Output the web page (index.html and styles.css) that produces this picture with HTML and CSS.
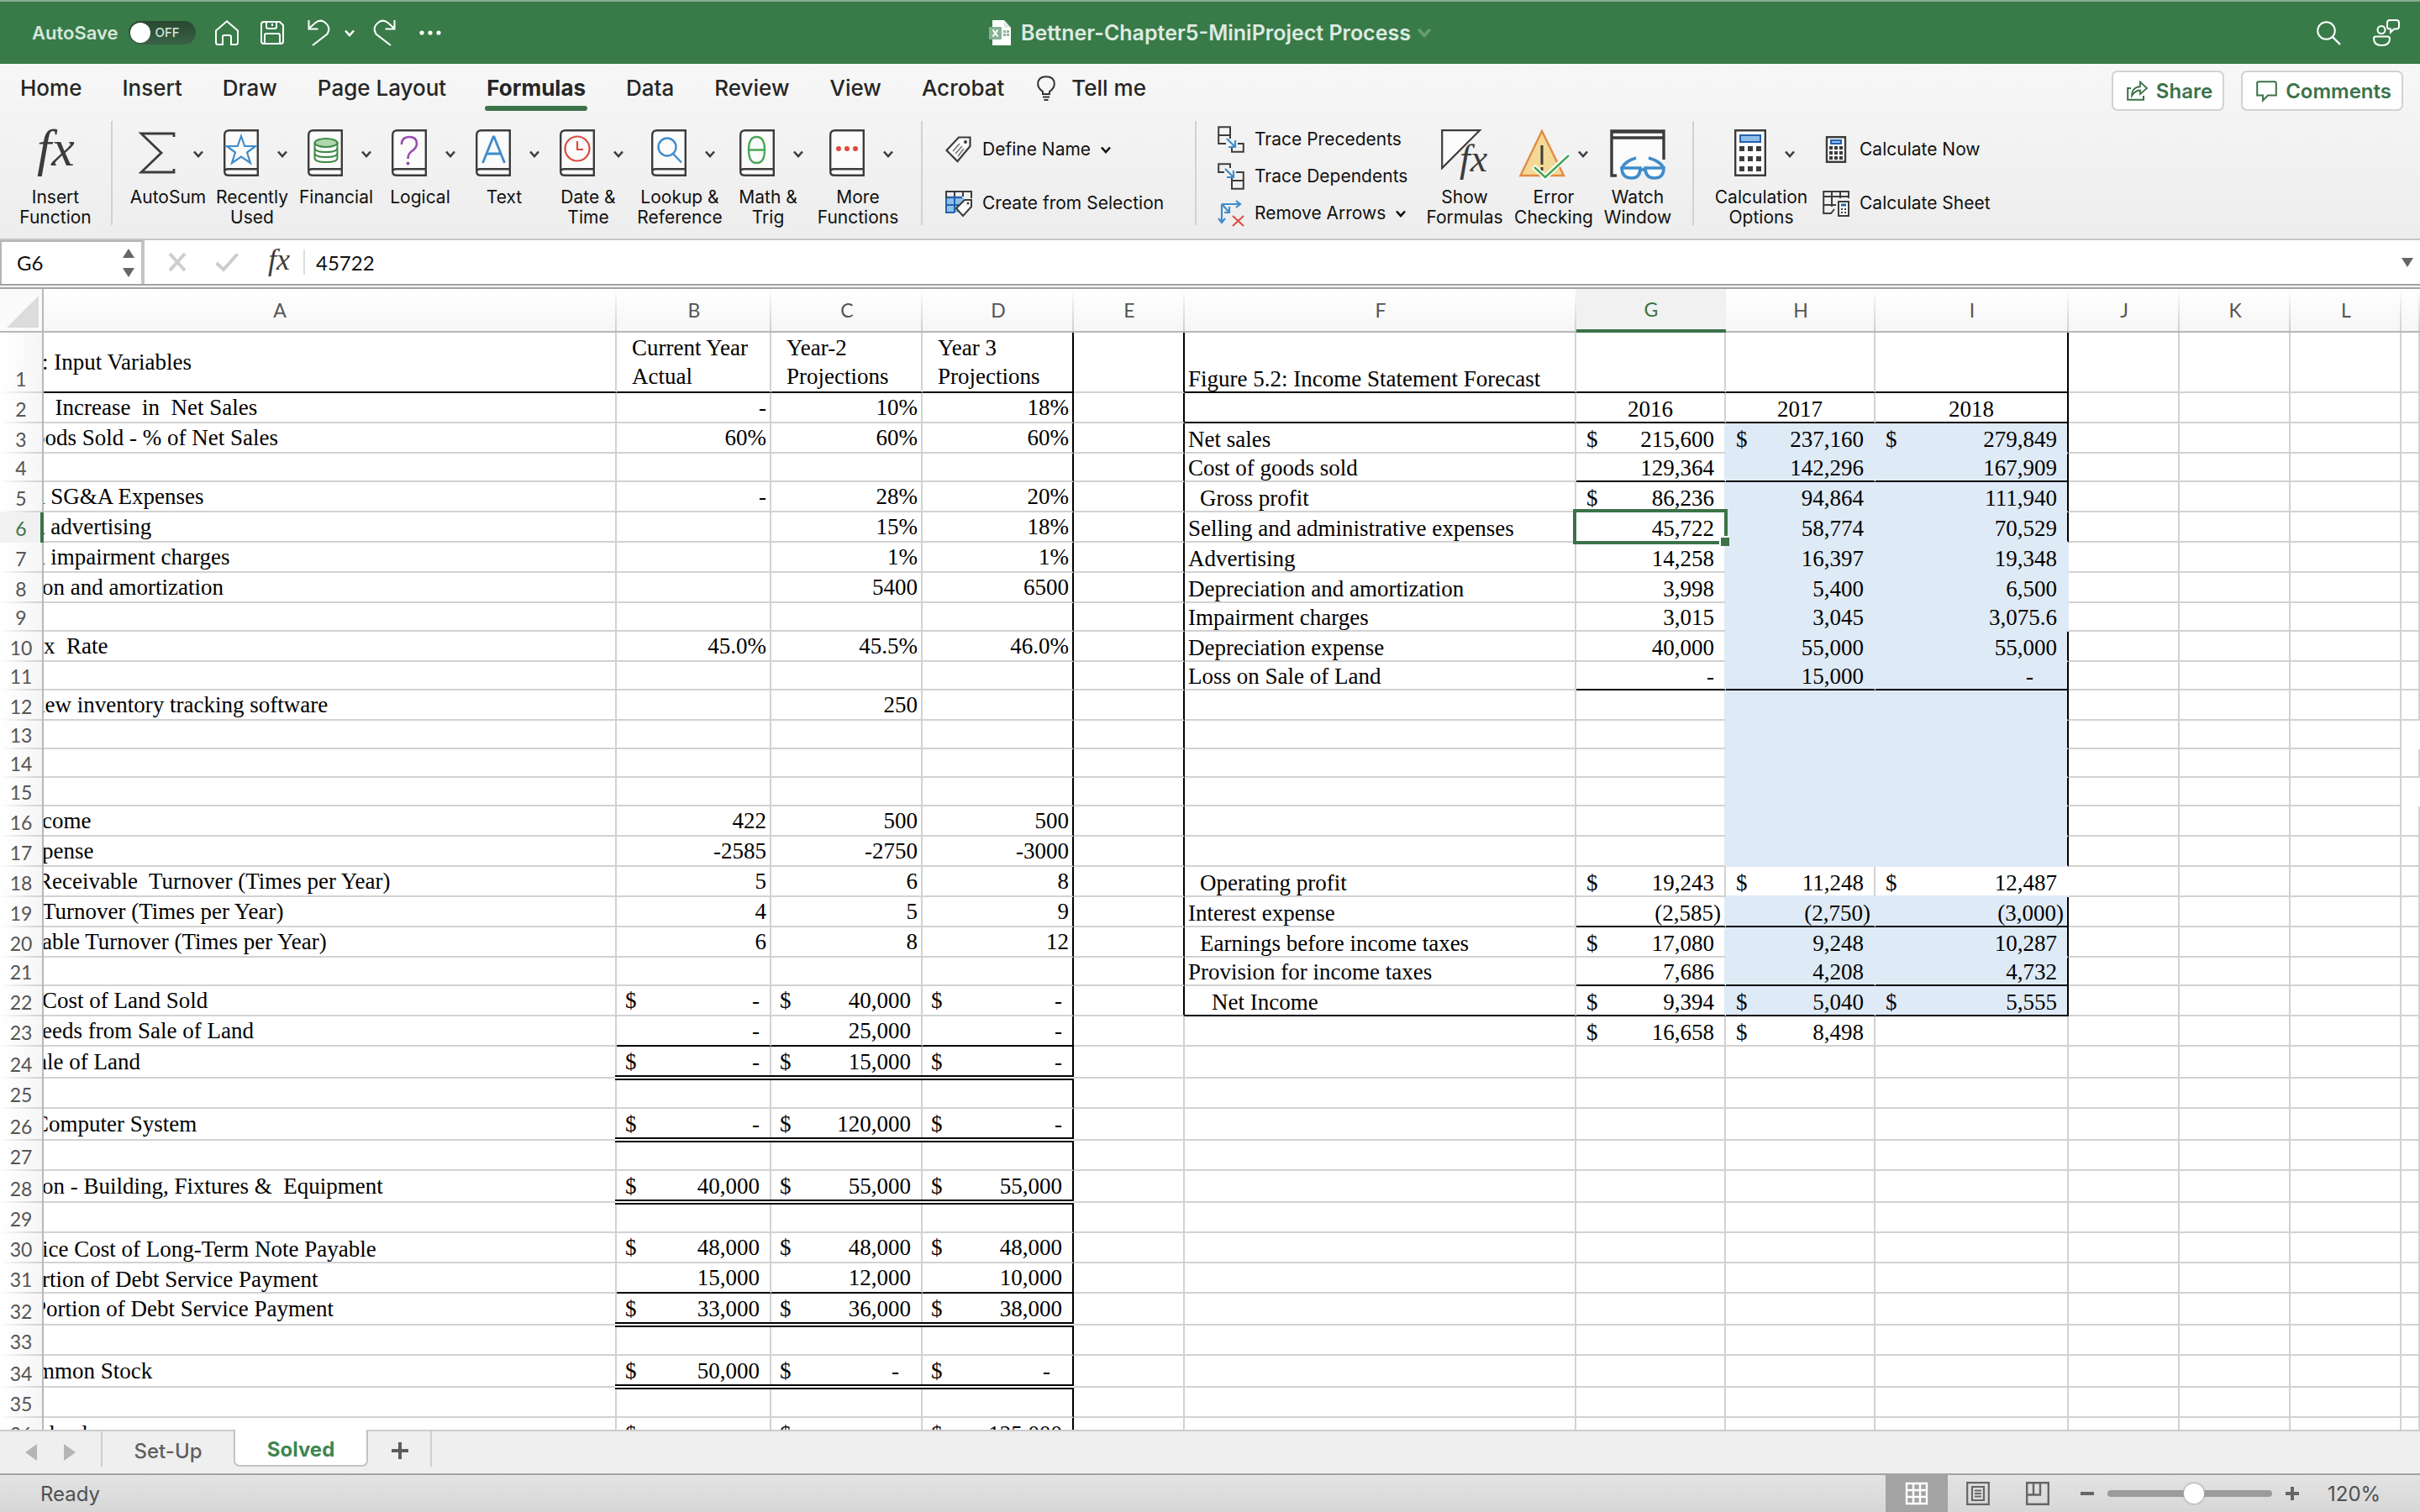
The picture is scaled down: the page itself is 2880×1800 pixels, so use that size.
FILE: index.html
```html
<!DOCTYPE html>
<html lang="en">
<head>
<meta charset="utf-8">
<title>Bettner-Chapter5-MiniProject Process</title>
<link rel="stylesheet" href="styles.css">
</head>
<body>
<svg class="defs" aria-hidden="true">
  <symbol id="chev" viewBox="0 0 12 9"><path d="M1 1.5l5 5.5l5-5.5" fill="none" stroke="currentColor" stroke-width="2.6"/></symbol>
  <symbol id="book" viewBox="0 0 42 56"><path d="M1.2 49V7Q1.2 1.2 7 1.2H40.8V54.8H6.5Q1.2 54.8 1.2 50.500Q1.200 47.200 5.500 47.200H40.800" fill="#fbfbfb" stroke="#3c3c3c" stroke-width="2.400"/></symbol>
</svg>

<header class="titlebar">
  <div class="quick">
    <label class="autosave">AutoSave <span class="switch"><input type="checkbox"><span class="off">OFF</span></span></label>
    <button class="home" aria-label="Home"><svg width="28" height="30" viewBox="0 0 28 30"><path d="M1 12.500L14 1.200L27 12.500V26.500Q27 29 24.500 29H19V20Q19 18 17 18H11Q9 18 9 20V29H3.500Q1 29 1 26.500Z" fill="none" stroke="#fff" stroke-width="2"/></svg></button>
    <button class="save" aria-label="Save"><svg width="28" height="28" viewBox="0 0 28 28"><path d="M4 1H23L27 5V24Q27 27 24 27H4Q1 27 1 24V4Q1 1 4 1ZM7 1V7Q7 9 9 9H17Q19 9 19 7V1M5 27V17Q5 15 7 15H21Q23 15 23 17V27M14 3V6" fill="none" stroke="#fff" stroke-width="2"/></svg></button>
    <button class="undo" aria-label="Undo"><svg width="27" height="32" viewBox="0 0 27 32"><path d="M1.500 1V11.500H12.500M1.500 11L9.500 4Q15 -0.500 20.500 3.500Q28.500 9.500 23.500 17.500L6 31" fill="none" stroke="#fff" stroke-width="2"/></svg></button>
    <button class="undo-more" aria-label="Undo history"><svg width="12" height="9"><use href="#chev"/></svg></button>
    <button class="redo" aria-label="Redo"><svg width="27" height="32" viewBox="0 0 27 32"><path d="M25.500 1V11.500H14.500M25.500 11L17.500 4Q12 -0.500 6.500 3.500Q-1.500 9.500 3.500 17.500L21 31" fill="none" stroke="#fff" stroke-width="2"/></svg></button>
    <button class="dots" aria-label="More commands"><svg width="26" height="6"><g fill="#fff"><circle cx="3" cy="3" r="2.600"/><circle cx="13" cy="3" r="2.600"/><circle cx="23" cy="3" r="2.600"/></g></svg></button>
  </div>
  <h1 class="doc">
    <svg width="26" height="30" viewBox="0 0 26 30"><path d="M4 0H18L26 9V30H4Z" fill="#fff"/><path d="M18 0V9H26" fill="#dfe9e2"/><path d="M17 12h3v3h-3zM21 12h3v3h-3zM17 16h3v3h-3zM21 16h3v3h-3z" fill="#8fb59a"/><rect y="8" width="15" height="15" rx="1" fill="#86b093"/><path d="M4.500 11.500L10.500 19.500M10.500 11.500L4.500 19.500" stroke="#fff" stroke-width="2"/></svg>
    <span>Bettner-Chapter5-MiniProject Process</span>
    <svg class="faint" width="16" height="12"><use href="#chev"/></svg>
  </h1>
  <div class="right">
    <button aria-label="Search"><svg width="29" height="29" viewBox="0 0 29 29"><circle cx="11.500" cy="11.500" r="10.300" fill="none" stroke="#fff" stroke-width="2"/><path d="M19 19L28 28" stroke="#fff" stroke-width="2.400"/></svg></button>
    <button aria-label="Account"><svg width="32" height="32" viewBox="0 0 32 32"><g fill="none" stroke="#fff" stroke-width="2"><circle cx="10" cy="12.500" r="4.500"/><path d="M1 23Q1 20.500 3.500 20.500H17.500Q20 20.500 20 23Q20 31 10.500 31Q1 31 1 23Z"/><path d="M20 1H28Q31 1 31 4V8.500Q31 11.500 28 11.500H25L21 15.500V11.500H20Q17 11.500 17 8.500V4Q17 1 20 1Z"/></g></svg></button>
  </div>
</header>

<section class="ribbon">
  <div class="tabrow">
    <nav class="tabs">
      <button>Home</button><button>Insert</button><button>Draw</button><button>Page Layout</button><button class="on">Formulas</button><button>Data</button><button>Review</button><button>View</button><button>Acrobat</button>
      <button class="tell"><svg width="22" height="30" viewBox="0 0 22 30"><path d="M7 22V19Q1.200 15 1.200 10Q1.200 1.200 11 1.200Q20.800 1.200 20.800 10Q20.800 15 15 19V22ZM7 25.500H15M8.500 29H13.500" fill="none" stroke="#333" stroke-width="2"/></svg>Tell me</button>
    </nav>
    <div class="actions">
      <button><svg width="25" height="24" viewBox="0 0 25 24"><path d="M5 9H1.200V22.800H20V18" fill="none" stroke="#3b7249" stroke-width="2"/><path d="M6 18Q6 8 16 7V1.500L24 9L16 16V11.500Q10 11.500 6 18Z" fill="none" stroke="#3b7249" stroke-width="1.800"/></svg>Share</button>
      <button><svg width="25" height="25" viewBox="0 0 25 25"><path d="M1.200 3Q1.200 1.200 3 1.200H22Q23.800 1.200 23.800 3V17.500H14L8 23.500V17.500H1.200Z" fill="none" stroke="#3b7249" stroke-width="2"/></svg>Comments</button>
    </div>
  </div>

  <div class="tools">
    <button class="big w132"><span class="pic"><svg width="52" height="58" viewBox="0 0 52 58"><text class="fx" x="4" y="43" font-size="62">fx</text></svg></span><span class="cap">Insert<br>Function</span></button>
    <i class="sep"></i>
    <div class="group library">
      <button class="big"><span class="pic off4"><svg width="42" height="56" viewBox="0 0 42 56"><path d="M41 9V5H2L26 28L2 51H41V47" fill="none" stroke="#3c3c3c" stroke-width="2.800"/></svg><svg class="ch" width="12" height="9"><use href="#chev"/></svg></span><span class="cap">AutoSum</span></button>
      <button class="big"><span class="pic off4"><svg width="42" height="56"><use href="#book"/><path d="M21 8L25.200 20H38L28 27.500L32 40L21 32.500L10 40L14 27.500L4 20H16.800Z" fill="none" stroke="#3f8ccb" stroke-width="2.200"/></svg><svg class="ch" width="12" height="9"><use href="#chev"/></svg></span><span class="cap">Recently<br>Used</span></button>
      <button class="big"><span class="pic off4"><svg width="42" height="56"><use href="#book"/><g fill="none" stroke="#3f8a44" stroke-width="2"><ellipse cx="22" cy="16" rx="13.500" ry="5" fill="#aed7ae"/><path d="M8.500 16V34Q8.500 39 22 39Q35.500 39 35.500 34V16M8.500 22Q8.500 27 22 27Q35.500 27 35.500 22M8.500 28Q8.500 33 22 33Q35.500 33 35.500 28"/></g></svg><svg class="ch" width="12" height="9"><use href="#chev"/></svg></span><span class="cap">Financial</span></button>
      <button class="big"><span class="pic off4"><svg width="42" height="56"><use href="#book"/><path d="M12 18Q12 9 21 9Q30 9 30 17Q30 22 24 26Q19.500 29 19.500 35" fill="none" stroke="#9a4bae" stroke-width="2.600"/><circle cx="19.500" cy="40.500" r="2" fill="#9a4bae"/></svg><svg class="ch" width="12" height="9"><use href="#chev"/></svg></span><span class="cap">Logical</span></button>
      <button class="big"><span class="pic off4"><svg width="42" height="56"><use href="#book"/><path d="M8.500 40L21 9H22L34.500 40M13 29H30" fill="none" stroke="#3f8ccb" stroke-width="2.800"/></svg><svg class="ch" width="12" height="9"><use href="#chev"/></svg></span><span class="cap">Text</span></button>
      <button class="big"><span class="pic off4"><svg width="42" height="56"><use href="#book"/><g fill="none" stroke="#dc4a41" stroke-width="2.200"><circle cx="21" cy="23" r="14.500"/><path d="M21 14V24H28"/></g></svg><svg class="ch" width="12" height="9"><use href="#chev"/></svg></span><span class="cap">Date &amp;<br>Time</span></button>
      <button class="big"><span class="pic off4"><svg width="42" height="56"><use href="#book"/><g fill="none" stroke="#3f8ccb" stroke-width="2.400"><circle cx="19" cy="21" r="10.500"/><path d="M26 29L36 39.500"/></g></svg><svg class="ch" width="12" height="9"><use href="#chev"/></svg></span><span class="cap">Lookup &amp;<br>Reference</span></button>
      <button class="big"><span class="pic off4"><svg width="42" height="56"><use href="#book"/><path d="M20.500 9Q30 9 30 24.500Q30 40 20.500 40Q11 40 11 24.500Q11 9 20.500 9ZM11 24.500H30" fill="none" stroke="#4aa657" stroke-width="2.400"/></svg><svg class="ch" width="12" height="9"><use href="#chev"/></svg></span><span class="cap">Math &amp;<br>Trig</span></button>
      <button class="big"><span class="pic off4"><svg width="42" height="56"><use href="#book"/><g fill="#dc4a41"><circle cx="11" cy="23" r="3"/><circle cx="21" cy="23" r="3"/><circle cx="31" cy="23" r="3"/></g></svg><svg class="ch" width="12" height="9"><use href="#chev"/></svg></span><span class="cap">More<br>Functions</span></button>
    </div>
    <i class="sep"></i>
    <div class="small names">
      <button><svg width="32" height="32" viewBox="0 0 32 32"><path d="M1.500 17L16 1.500H29.500V12L14.500 30Z" fill="#fbfbfb" stroke="#3c3c3c" stroke-width="2.200"/><circle cx="24" cy="7" r="2" fill="#3c3c3c"/><path d="M9 18L17 9M12 21L20 12M15 24L22 15" stroke="#777" stroke-width="1.600"/></svg><span>Define Name</span><svg width="12" height="9"><use href="#chev"/></svg></button>
      <button><svg width="32" height="32" viewBox="0 0 32 32"><path d="M1 9H22V27H1Z" fill="#8fc0ea"/><path d="M1 18H16M1 27H11M11 9V27M1 9V28" stroke="#2461ae" stroke-width="2"/><path d="M1 9H20" stroke="#2461ae" stroke-width="2.400"/><path d="M1 10V2H31V10M11 2V8M21 2V8" fill="none" stroke="#3c3c3c" stroke-width="2"/><path d="M13 22L23 12H31V20L21 31Z" fill="#fbfbfb" stroke="#3c3c3c" stroke-width="2"/><circle cx="27" cy="16" r="1.500" fill="#3c3c3c"/></svg><span>Create from Selection</span></button>
    </div>
    <i class="sep"></i>
    <div class="small audit">
      <button><svg width="32" height="32" viewBox="0 0 32 32"><path d="M10 21H1.200V1.200H15V15M1.200 11H15M24 21H30.800V30.800H17V25" fill="none" stroke="#3c3c3c" stroke-width="2"/><path d="M11 15L21 25M21 17V25H13" fill="none" stroke="#3f8ccb" stroke-width="2.200"/></svg><span>Trace Precedents</span></button>
      <button><svg width="32" height="32" viewBox="0 0 32 32"><path d="M8 11H1.200V1.200H15V6M22 11H30.800V30.800H17V21H30.800M17 21V18" fill="none" stroke="#3c3c3c" stroke-width="2"/><path d="M9 7L19 17M19 9V17H11" fill="none" stroke="#3f8ccb" stroke-width="2.200"/></svg><span>Trace Dependents</span></button>
      <button><svg width="32" height="32" viewBox="0 0 32 32"><path d="M5 5H27M22 1L27 5L22 9M5 5V26M1 22L5 27L9 22M6 6L14 15M14 8V15H8" fill="none" stroke="#3f8ccb" stroke-width="2.200"/><path d="M18 19L31 31M31 19L18 31" stroke="#dc4a41" stroke-width="2"/></svg><span>Remove Arrows</span><svg width="12" height="9"><use href="#chev"/></svg></button>
    </div>
    <button class="big w106"><span class="pic"><svg width="56" height="58" viewBox="0 0 56 58"><path d="M1.200 46V1.200H46Z" fill="#fbfbfb" stroke="#3c3c3c" stroke-width="2.200"/><text class="fx" x="22" y="50" font-size="46">fx</text></svg></span><span class="cap">Show<br>Formulas</span></button>
    <button class="big w106"><span class="pic"><svg class="warn" width="60" height="58" viewBox="0 0 60 58"><path d="M27 2L53 55H1.500Z" fill="#f3d995" stroke="#e28b45" stroke-width="2.400"/><path d="M27 19V42M27 45V49" stroke="#3c3c3c" stroke-width="3"/><path d="M17 44L31 57L59 30" fill="none" stroke="#fff" stroke-width="6"/><path d="M18 45L31 57L59 31" fill="none" stroke="#45a555" stroke-width="2.400"/></svg><svg class="ch near" width="12" height="9"><use href="#chev"/></svg></span><span class="cap">Error<br>Checking</span></button>
    <button class="big w94"><span class="pic"><svg width="66" height="60" viewBox="0 0 66 60"><path d="M8 55H2V2H64V36" fill="#fbfbfb" stroke="#3c3c3c" stroke-width="3.400"/><path d="M2 3H64M2 10H64" stroke="#3c3c3c" stroke-width="3.600"/><g fill="#fff" stroke="#3f8ccb" stroke-width="3.600"><path d="M14 46H36Q36 58 26 58Q14 58 14 46ZM42 46H64Q64 58 53 58Q42 58 42 46Z"/><path d="M36 48H42M14 46Q18 38 31 34M64 46Q60 38 46 34" fill="none"/></g></svg></span><span class="cap">Watch<br>Window</span></button>
    <i class="sep wide"></i>
    <button class="big w118"><span class="pic off4"><svg width="38" height="56" viewBox="0 0 38 56"><path d="M1.200 1.200H36.800V54.800H1.200Z" fill="#fff" stroke="#3c3c3c" stroke-width="2.400"/><path d="M7 7H31V15H7Z" fill="#8fbdea" stroke="#2461ae" stroke-width="2"/><path d="M6 23H32M6 35H32M6 47H32" stroke="#3c3c3c" stroke-width="6" stroke-dasharray="6 4"/></svg><svg class="ch" width="12" height="9"><use href="#chev"/></svg></span><span class="cap">Calculation<br>Options</span></button>
    <div class="small calc">
      <button><svg width="32" height="32" viewBox="0 0 32 32"><path d="M5 1.200H27V30.800H5Z" fill="#fff" stroke="#3c3c3c" stroke-width="2.400"/><path d="M9 7H23" stroke="#2461ae" stroke-width="6"/><path d="M11 7H21" stroke="#8fbdea" stroke-width="2"/><path d="M8 14H24M8 20H24M8 26H24" stroke="#3c3c3c" stroke-width="4" stroke-dasharray="4 2"/></svg><span>Calculate Now</span></button>
      <button><svg width="32" height="32" viewBox="0 0 32 32"><path d="M31 10V2H1.200V28H10L14 23M1 8H31M1 18H16M11 2V20M21 2V10" fill="none" stroke="#3c3c3c" stroke-width="2"/><path d="M19 14H31V31H19Z" fill="#fff" stroke="#3c3c3c" stroke-width="2"/><path d="M22 18H28" stroke="#2461ae" stroke-width="3"/><path d="M22 23H29M22 27H29" stroke="#3c3c3c" stroke-width="2" stroke-dasharray="2 2"/></svg><span>Calculate Sheet</span></button>
    </div>
  </div>
</section>

<section class="formulabar">
  <div class="namebox"><input aria-label="Name box" value="G6"><svg width="14" height="34" viewBox="0 0 14 34"><path d="M0 11L7 0L14 11ZM0 23L7 34L14 23Z" fill="#666"/></svg></div>
  <button class="cancel" aria-label="Cancel"><svg width="22" height="22" viewBox="0 0 22 22"><path d="M2 1L20 21M20 1L2 21" stroke="#cdcdcd" stroke-width="4"/></svg></button>
  <button class="enter" aria-label="Enter"><svg width="28" height="22" viewBox="0 0 28 22"><path d="M1.500 12L10 20L26.500 1.500" fill="none" stroke="#cdcdcd" stroke-width="4"/></svg></button>
  <button class="fxb" aria-label="Insert function"><svg width="32" height="34" viewBox="0 0 32 34"><text class="fx" x="4" y="26" font-size="36">fx</text></svg></button>
  <input class="formula" aria-label="Formula" value="45722">
  <button class="expand" aria-label="Expand formula bar"><svg width="14" height="11"><path d="M0 0H14L7 11Z" fill="#666"/></svg></button>
</section>

<main class="sheet">
<table>
<colgroup><col class="c-n"><col class="c-a"><col class="c-b"><col class="c-c"><col class="c-c"><col class="c-e"><col class="c-f"><col class="c-g"><col class="c-g"><col class="c-i"><col class="c-e"><col class="c-e"><col class="c-e"><col></colgroup>
<thead><tr><th class="corner"><svg width="38" height="38"><path d="M38 0V38H0Z" fill="#dcdcdc"/></svg><th class="first">A<th>B<th>C<th>D<th>E<th>F<th class="cur">G<th>H<th>I<th>J<th>K<th>L<th></tr></thead>
<tbody>
<tr class="h72 stmt edge line-in line-fi"><th>1<td class="cut2">: Input Variables<td class="head">Current Year<br>Actual<td class="head">Year-2<br>Projections<td class="head">Year 3<br>Projections<td><td>Figure 5.2: Income Statement Forecast<td><td><td><td><td><td><td></tr>
<tr class="stmt edge line-fi years"><th>2<td class="cut12">e  Increase  in  Net Sales<td>-<td>10%<td>18%<td><td><td>2016<td>2017<td>2018<td><td><td><td></tr>
<tr class="stmt edge fill"><th>3<td class="cut12">oods Sold - % of Net Sales<td>60%<td>60%<td>60%<td><td>Net sales<td><span>$</span>215,600<td><span>$</span>237,160<td><span>$</span>279,849<td><td><td><td></tr>
<tr class="h34 stmt edge fill line-gi"><th>4<td><td><td><td><td><td>Cost of goods sold<td>129,364<td>142,296<td>167,909<td><td><td><td></tr>
<tr class="stmt edge fill"><th>5<td class="cut12">d SG&amp;A Expenses<td>-<td>28%<td>20%<td><td class="in1">Gross profit<td><span>$</span>86,236<td>94,864<td>111,940<td><td><td><td></tr>
<tr class="stmt edge fill"><th class="cur">6<td class="cut12">d advertising<td><td>15%<td>18%<td><td>Selling and administrative expenses<td class="active">45,722<td>58,774<td>70,529<td><td><td><td></tr>
<tr class="stmt fill"><th>7<td class="cut12">d impairment charges<td><td>1%<td>1%<td><td>Advertising<td>14,258<td>16,397<td>19,348<td><td><td><td></tr>
<tr class="stmt fill"><th>8<td class="cut2">on and amortization<td><td>5400<td>6500<td><td>Depreciation and amortization<td>3,998<td>5,400<td>6,500<td><td><td><td></tr>
<tr class="h34 stmt fill"><th>9<td><td><td><td><td><td>Impairment charges<td>3,015<td>3,045<td>3,075.6<td><td><td><td></tr>
<tr class="stmt edge fill"><th>10<td>x  Rate<td>45.0%<td>45.5%<td>46.0%<td><td>Depreciation expense<td>40,000<td>55,000<td>55,000<td><td><td><td></tr>
<tr class="h34 stmt edge fill line-gi"><th>11<td><td><td><td><td><td>Loss on Sale of Land<td>-<td>15,000<td class="dash3">-<td><td><td><td></tr>
<tr class="stmt edge fill"><th>12<td class="cut12">new inventory tracking software<td><td>250<td><td><td><td><td><td><td><td><td><td></tr>
<tr class="h34 stmt edge fill"><th>13<td><td><td><td><td><td><td><td><td><td><td><td></tr>
<tr class="h34 stmt edge fill"><th>14<td><td><td><td><td><td><td><td><td><td><td><td><td></tr>
<tr class="h34 stmt edge fill"><th>15<td><td><td><td><td><td><td><td><td><td><td><td></tr>
<tr class="stmt edge fill"><th>16<td class="cut2">come<td>422<td>500<td>500<td><td><td><td><td><td><td><td><td></tr>
<tr class="stmt edge fill"><th>17<td class="cut2">pense<td>-2585<td>-2750<td>-3000<td><td><td><td><td><td><td><td><td></tr>
<tr class="stmt profit"><th>18<td class="cut8">Receivable  Turnover (Times per Year)<td>5<td>6<td>8<td><td class="in1">Operating profit<td><span>$</span>19,243<td><span>$</span>11,248<td><span>$</span>12,487<td><td><td><td></tr>
<tr class="stmt edge fill line-gi neg"><th>19<td class="cut2">Turnover (Times per Year)<td>4<td>5<td>9<td><td>Interest expense<td>(2,585)<td>(2,750)<td>(3,000)<td><td><td><td></tr>
<tr class="stmt edge fill"><th>20<td class="cut2">able Turnover (Times per Year)<td>6<td>8<td>12<td><td class="in1">Earnings before income taxes<td><span>$</span>17,080<td>9,248<td>10,287<td><td><td><td></tr>
<tr class="h34 stmt edge fill line-gi"><th>21<td><td><td><td><td><td>Provision for income taxes<td>7,686<td>4,208<td>4,732<td><td><td><td></tr>
<tr class="stmt edge fill line-fi acct"><th>22<td class="cut2">Cost of Land Sold<td><span>$</span>-<td><span>$</span>40,000<td><span>$</span>-<td><td class="in2">Net Income<td><span>$</span>9,394<td><span>$</span>5,040<td><span>$</span>5,555<td><td><td><td></tr>
<tr class="acct line-bd"><th>23<td class="cut2">eeds from Sale of Land<td>-<td>25,000<td>-<td><td><td><span>$</span>16,658<td><span>$</span>8,498<td><td><td><td><td></tr>
<tr class="h38 acct total"><th>24<td class="cut8">ale of Land<td><span>$</span>-<td><span>$</span>15,000<td><span>$</span>-<td><td><td><td><td><td><td><td><td></tr>
<tr><th>25<td><td><td><td><td><td><td><td><td><td><td><td><td></tr>
<tr class="h38 acct total"><th>26<td class="cut12">Computer System<td><span>$</span>-<td><span>$</span>120,000<td><span>$</span>-<td><td><td><td><td><td><td><td><td></tr>
<tr><th>27<td><td><td><td><td><td><td><td><td><td><td><td><td></tr>
<tr class="h38 acct total"><th>28<td class="cut2">on - Building, Fixtures &amp;  Equipment<td><span>$</span>40,000<td><span>$</span>55,000<td><span>$</span>55,000<td><td><td><td><td><td><td><td><td></tr>
<tr><th>29<td><td><td><td><td><td><td><td><td><td><td><td><td></tr>
<tr class="acct"><th>30<td class="low cut2">ice Cost of Long-Term Note Payable<td><span>$</span>48,000<td><span>$</span>48,000<td><span>$</span>48,000<td><td><td><td><td><td><td><td><td></tr>
<tr class="acct line-bd"><th>31<td class="low cut2">rtion of Debt Service Payment<td>15,000<td>12,000<td>10,000<td><td><td><td><td><td><td><td><td></tr>
<tr class="h38 acct total"><th>32<td class="cut12">Portion of Debt Service Payment<td><span>$</span>33,000<td><span>$</span>36,000<td><span>$</span>38,000<td><td><td><td><td><td><td><td><td></tr>
<tr><th>33<td><td><td><td><td><td><td><td><td><td><td><td><td></tr>
<tr class="h38 acct total"><th>34<td class="cut8">mmon Stock<td><span>$</span>50,000<td class="dash2"><span>$</span>-<td class="dash2"><span>$</span>-<td><td><td><td><td><td><td><td><td></tr>
<tr><th>35<td><td><td><td><td><td><td><td><td><td><td><td><td></tr>
<tr class="acct"><th>36<td class="low cut8">idends<td class="low"><span>$</span>-<td class="low"><span>$</span>-<td class="low"><span>$</span>125,000<td><td><td><td><td><td><td><td><td></tr>
</tbody>
</table>
</main>

<nav class="sheettabs">
  <button class="prev" aria-label="Previous sheet"><svg width="14" height="20"><path d="M14 0V20L0 10Z" fill="#b5b5b5"/></svg></button>
  <button class="next" aria-label="Next sheet"><svg width="14" height="20"><path d="M0 0V20L14 10Z" fill="#b5b5b5"/></svg></button>
  <button class="tab">Set-Up</button>
  <button class="tab sel">Solved</button>
  <button class="add" aria-label="Add sheet"><svg width="20" height="20"><path d="M10 0V20M0 10H20" stroke="#5c5c5c" stroke-width="4"/></svg></button>
</nav>

<footer class="status">
  <span class="ready">Ready</span>
  <button class="view sel" aria-label="Normal view"><svg width="28" height="28" viewBox="0 0 28 28"><path d="M2 2H26V26H2ZM10 2V26M18 2V26M2 10H26M2 18H26" fill="none" stroke="#fff" stroke-width="2.400"/></svg></button>
  <button class="view" aria-label="Page layout view"><svg width="28" height="28" viewBox="0 0 28 28"><path d="M1.200 1.200H26.800V26.800H1.200ZM7 6H21V22H7ZM10 10.500H18M10 14H18M10 17.500H18" fill="none" stroke="#666" stroke-width="2.200"/></svg></button>
  <button class="view" aria-label="Page break view"><svg width="28" height="28" viewBox="0 0 28 28"><path d="M1.200 1.200H26.800V26.800H1.200ZM9 1V15M1 15.500H17V1" fill="none" stroke="#666" stroke-width="2.400"/></svg></button>
  <button class="zoomout" aria-label="Zoom out"><svg width="16" height="16"><path d="M0 8H16" stroke="#666" stroke-width="4"/></svg></button>
  <input class="zoom" type="range" min="0" max="100" value="53" aria-label="Zoom">
  <button class="zoomin" aria-label="Zoom in"><svg width="16" height="16"><path d="M0 8H16M8 0V16" stroke="#666" stroke-width="4"/></svg></button>
  <span class="pct">120%</span>
</footer>
</body>
</html>
```
FILE: styles.css
```css
*, *::before, *::after { box-sizing: border-box; }
html, body { height: 100%; }
body {
  margin: 0;
  display: flex;
  flex-direction: column;
  height: 100vh;
  overflow: hidden;
  font-family: Inter, "Liberation Sans", sans-serif;
  color: #111;
  background: #fff;
}
button {
  margin: 0; padding: 0; border: 0; background: none;
  font: inherit; color: inherit; white-space: nowrap;
}
input { font: inherit; color: inherit; border: 0; margin: 0; padding: 0; background: none; }
svg { display: block; flex: none; overflow: visible; }
.defs { position: absolute; width: 0; height: 0; }
.fx { font-family: "Liberation Serif", serif; font-style: italic; fill: #3c3c3c; }

/* Title bar */
.titlebar {
  flex: none;
  display: grid;
  grid-template-columns: 1fr auto 1fr;
  align-items: center;
  height: 76px;
  background: #387b49;
  border-top: 2px solid #87ad91;
  color: #fff;
}
.quick { display: flex; align-items: center; padding-left: 38px; }
.autosave { display: flex; align-items: center; gap: 12px; width: 192px; font-size: 22px; font-weight: 600; color: #d6e6da; }
.switch { position: relative; display: block; width: 80px; height: 28px; }
.switch input { appearance: none; display: block; width: 80px; height: 28px; border-radius: 14px; background: linear-gradient(#28482f, #3a6147); }
.switch input::before { content: ""; display: block; width: 24px; height: 24px; border-radius: 50%; background: #fff; position: relative; left: 2px; top: 2px; }
.off { position: absolute; left: 32px; top: 5px; font-size: 15px; line-height: 18px; font-weight: 500; }
.home { margin-left: 26px; }
.save { margin-left: 26px; }
.undo { margin-left: 28px; }
.undo-more { margin-left: 17px; }
.redo { margin-left: 22px; }
.dots { margin-left: 28px; }
.doc { display: flex; align-items: center; gap: 12px; margin: 0; font-size: 25px; line-height: 32px; font-weight: 600; color: #dfeae2; }
.doc .faint { color: #6b9c78; margin-left: -4px; }
.right { display: flex; align-items: center; justify-content: flex-end; gap: 38px; padding-right: 24px; }

/* Ribbon */
.ribbon { flex: none; height: 210px; background: linear-gradient(#f7f7f7, #ededed); border-bottom: 2px solid #c6c6c6; }
.tabrow { display: flex; justify-content: space-between; height: 68px; }
.tabs { display: flex; gap: 48px; padding-left: 24px; font-size: 26px; font-weight: 500; color: #262626; }
.tabs button { height: 60px; line-height: 32px; padding-bottom: 2px; }
.tabs .on { position: relative; font-weight: 700; }
.tabs .on::after { content: ""; position: absolute; left: -2px; right: -2px; bottom: 4px; height: 6px; border-radius: 3px; background: #3b7249; }
.tabs .tell { display: flex; align-items: center; gap: 19px; margin-left: -9px; }
.actions { display: flex; gap: 20px; padding: 8px 20px 0 0; }
.actions button {
  display: flex; align-items: center; gap: 10px; height: 48px; padding: 0 12px 0 16px;
  border: 2px solid #d2d2d2; border-radius: 7px; background: #fff;
  font-size: 24px; font-weight: 600; color: #3b7249;
}
.tools { display: flex; align-items: flex-start; height: 126px; font-size: 21px; line-height: 24px; color: #111; }
.sep { flex: none; width: 2px; height: 124px; background: #d2d2d2; }
.library { display: grid; grid-template-columns: repeat(6, 100px) 118px 92px 122px; padding: 0 14px 0 16px; }
.big { flex: none; display: flex; flex-direction: column; align-items: center; padding-top: 10px; }
.pic { display: flex; height: 56px; margin-bottom: 13px; color: #3c3c3c; }
.off4 { padding-left: 8px; }
.ch { margin: 25px 0 0 22px; }
.near { margin-left: 10px; }
.w132 { width: 132px; }
.w118 { width: 118px; }
.w106 { width: 106px; }
.w94 { width: 94px; margin-right: 18px; }
.wide { margin-right: 21px; }
.small { display: flex; flex-direction: column; color: #111; }
.small button { display: flex; align-items: center; gap: 12px; height: 64px; }
.names { width: 324px; padding: 2px 0 0 27px; }
.audit { width: 266px; padding-left: 25px; }
.audit button { height: 44px; }
.calc { padding: 2px 0 0 14px; }

/* Formula bar */
.formulabar { flex: none; display: flex; align-items: center; height: 58px; border-bottom: 6px double #a2a2a2; background: #fff; font-family: Lato, "Liberation Sans", sans-serif; font-size: 24px; }
.namebox { display: flex; align-items: center; width: 172px; height: 52px; padding: 0 8px 0 18px; border: 2px solid #b4b4b4; border-right: 4px solid #c4c4c4; border-bottom: 0; }
.namebox input { flex: 1; min-width: 0; padding-bottom: 2px; }
.cancel { margin-left: 28px; }
.enter { margin-left: 34px; }
.fxb { margin-left: 31px; }
.formula { flex: 1; height: 30px; margin-left: 14px; padding-left: 13px; border-left: 2px solid #dedede; }
.expand { margin-right: 8px; }

/* Sheet */
.sheet { flex: 1; min-height: 0; overflow: hidden; border-bottom: 2px solid #cccccc; }
table { width: 100%; table-layout: fixed; border-collapse: separate; border-spacing: 0; font: 27px/30px "Liberation Serif", serif; color: #000; }
.c-n { width: 52px; }
.c-a { width: 682px; }
.c-b { width: 184px; }
.c-c { width: 180px; }
.c-e { width: 132px; }
.c-f { width: 466px; }
.c-g { width: 178px; }
.c-i { width: 230px; }
th { padding: 0; font: 23px/30px Lato, "Liberation Sans", sans-serif; color: #555; overflow: hidden; }
thead th {
  height: 52px; border-bottom: 2px solid #b8b8b8;
  background: linear-gradient(transparent, #d0d0d0) right / 2px 100% no-repeat, linear-gradient(#fff, #f6f6f6);
}
thead .first { padding-right: 120px; }
thead .corner { background: #fafafa; border-right: 2px solid #b8b8b8; padding: 4px 0 0 8px; }
thead .cur { background: #f1f1f1; border-bottom: 4px solid #3b7249; color: #3b7249; }
tbody tr { height: 36px; }
tbody .h34 { height: 34px; }
tbody .h38 { height: 38px; }
tbody .h72 { height: 72px; }
tbody th {
  vertical-align: bottom; border-right: 2px solid #b8b8b8;
  padding-bottom: 2px;
  background: linear-gradient(90deg, transparent, #d0d0d0) bottom / 100% 2px no-repeat, linear-gradient(90deg, #fff, #f6f6f6);
}
tbody .cur { background: #f1f1f1; border-right: 4px solid #3b7249; color: #3b7249; padding-left: 2px; }
td { padding: 0 4px; border-right: 2px solid #d2d2d2; border-bottom: 2px solid #d2d2d2; white-space: pre; text-align: right; vertical-align: middle; }
td:nth-child(2) { text-align: left; padding: 0; overflow: hidden; }
td:nth-child(n+7) { vertical-align: bottom; }
td:nth-child(7) { text-align: left; }
td:nth-child(n+8) { padding: 0 12px; }
td span { float: left; }
.acct :where(td:nth-child(n+3):nth-child(-n+5)) { padding: 0 12px 0 10px; }
td.head { text-align: left; line-height: 34px; padding-left: 18px; }
td.low { vertical-align: bottom; }
td.in1 { padding-left: 18px; }
td.in2 { padding-left: 32px; }
.cut2 { text-indent: -2px; }
.cut8 { text-indent: -8px; }
.cut12 { text-indent: -12px; }
.acct td.dash2 { padding-right: 26px; }
tbody td.dash3 { padding-right: 40px; }
.years td:nth-child(n+8) { text-align: center; }
.neg td:nth-child(n+8) { padding-right: 4px; }

/* Shaded forecast cells hide their gridlines */
.fill td:nth-child(9), .fill td:nth-child(10) { background: #deeaf6; border-color: #deeaf6; }
.fill td:nth-child(8) { border-right-color: #deeaf6; }
.profit td:nth-child(9), .profit td:nth-child(10) { border-bottom-color: #deeaf6; }
.profit td:nth-child(10) { border-right-color: #fff; }

/* Ruled lines */
td:nth-child(5) { border-right-color: #000; }
.stmt td:nth-child(6) { border-right-color: #000; }
.edge td:nth-child(10) { border-right-color: #000; }
.line-in td:nth-child(-n+5) { border-bottom-color: #000; }
.line-fi td:nth-child(n+7):nth-child(-n+10) { border-bottom-color: #000; }
.line-gi td:nth-child(n+8):nth-child(-n+10) { border-bottom-color: #000; }
.line-bd td:nth-child(n+3):nth-child(-n+5) { border-bottom-color: #000; }
.total td:nth-child(n+3):nth-child(-n+5) { position: relative; }
.total td:nth-child(n+3):nth-child(-n+5)::after {
  content: ""; position: absolute; left: -2px; right: -2px; bottom: -4px; height: 6px;
  border: solid #000; border-width: 2px 0; background: #fff;
}
.active { position: relative; }
.active::before { content: ""; position: absolute; z-index: 1; inset: -4px; border: 4px solid #3b7249; }
.active::after { content: ""; position: absolute; z-index: 2; right: -6px; bottom: -6px; width: 12px; height: 12px; background: #3b7249; border: solid #fff; border-width: 2px 0 0 2px; }

/* Sheet tabs */
.sheettabs { flex: none; display: flex; height: 50px; background: #efefef; font-size: 24px; font-weight: 500; color: #5f5f5f; }
.prev { margin: 0 32px 0 30px; }
.next { margin: 0 30px 0 0; }
.tab { width: 158px; height: 42px; padding-top: 5px; border-left: 2px solid #cfcfcf; }
.tab.sel { width: 160px; height: 44px; margin-top: -2px; border: 2px solid #c4c4c4; border-top: 0; border-radius: 0 0 7px 7px; background: #fff; font-weight: 700; color: #3f8550; }
.add { display: flex; align-items: center; justify-content: center; width: 76px; height: 42px; border-right: 2px solid #cfcfcf; padding: 4px 0 0 2px; }

/* Status bar */
.status { flex: none; display: flex; align-items: center; height: 46px; border-top: 2px solid #a3a3a3; background: linear-gradient(#e3e3e3, #d7d7d7); font-size: 24px; color: #505050; }
.ready { flex: 1; padding-left: 48px; }
.view { display: flex; align-items: center; justify-content: center; width: 71px; height: 44px; }
.view.sel { width: 74px; background: #a3a3a3; }
.zoomout { margin-left: 16px; }
.zoom { appearance: none; width: 196px; height: 24px; margin: 0 16px; }
.zoom::-webkit-slider-runnable-track { height: 8px; border-radius: 4px; background: #9b9b9b; }
.zoom::-webkit-slider-thumb { appearance: none; width: 24px; height: 24px; margin-top: -8px; border-radius: 50%; background: #fff; box-shadow: 0 0 2px 1px #aaa; }
.pct { width: 110px; margin-left: 34px; }
```
